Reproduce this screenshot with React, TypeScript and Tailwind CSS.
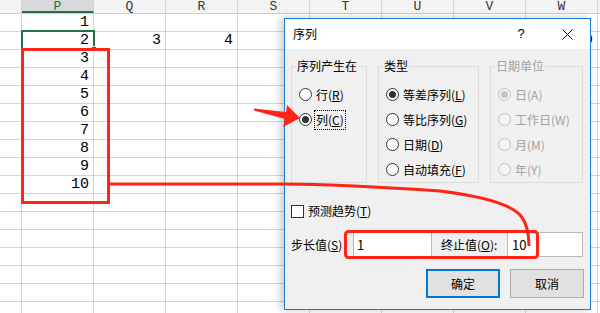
import React from "react";

const cols = ["P", "Q", "R", "S", "T", "U", "V", "W"];
const row2 = ["2", "3", "4", "5", "6", "7", "8", "9"];
const cjk = "font-['Microsoft_YaHei','Noto_Sans_CJK_SC',sans-serif]";

function Radio({ checked, disabled }: { checked?: boolean; disabled?: boolean }) {
  return (
    <span
      className={
        "flex h-[13px] w-[13px] shrink-0 items-center justify-center rounded-full border " +
        (disabled ? "border-[#c2c2c2] bg-[#f3f3f3]" : "border-[#333] bg-white")
      }
    >
      {checked && (
        <span className={"h-[7px] w-[7px] rounded-full " + (disabled ? "bg-[#c6c6c6]" : "bg-[#333]")} />
      )}
    </span>
  );
}

function Opt({
  text,
  k,
  checked,
  disabled,
  focus,
}: {
  text: string;
  k: string;
  checked?: boolean;
  disabled?: boolean;
  focus?: boolean;
}) {
  return (
    <div className="flex h-[25px] items-center">
      <Radio checked={checked} disabled={disabled} />
      <span
        className={
          "whitespace-nowrap leading-[18px] " +
          (focus ? "ml-[2px] border border-dotted border-black px-[1px]" : "ml-[4px]") +
          (disabled ? " text-[#a3a3a3]" : " text-black")
        }
      >
        {text}(<span className={disabled ? "" : "underline"}>{k}</span>)
      </span>
    </div>
  );
}

function Group({ title, w, disabled, children }: { title: string; w: string; disabled?: boolean; children: React.ReactNode }) {
  return (
    <fieldset className={"min-w-0 border border-[#dcdcdc] " + w}>
      <legend
        className={"ml-[4px] whitespace-nowrap px-[1px] leading-[16px] " + (disabled ? "text-[#a3a3a3]" : "text-black")}
      >
        {title}
      </legend>
      <div className="pl-[7px] pt-[8px]">{children}</div>
    </fieldset>
  );
}

export default function App() {
  return (
    <div className="relative h-[313px] w-[600px] overflow-hidden bg-white">
      {/* sheet */}
      <div className="flex flex-col font-['Liberation_Mono',monospace] text-[15px] text-black">
        <div className="flex h-[14px] border-b border-[#cfcfcf] bg-[#f3f3f3] text-[13px] leading-[13px]">
          <div className="w-[22px] shrink-0 border-r border-[#d4d4d4]" />
          {cols.map((c, i) => (
            <div
              key={c}
              className={
                "w-[72px] shrink-0 border-r border-[#d4d4d4] text-center " +
                (i === 0 ? "border-b-2 border-b-[#217346] bg-[#d9d9d9] text-[#217346]" : "text-[#333]")
              }
            >
              {c}
            </div>
          ))}
          <div className="flex-1" />
        </div>
        {Array.from({ length: 17 }).map((_, r) => (
          <div key={r} className="flex h-[18px] border-b border-[#d4d4d4] leading-[17px]">
            <div className="w-[22px] shrink-0 border-r border-[#d4d4d4]" />
            {cols.map((c, i) => {
              let v = "";
              if (r === 1) v = row2[i];
              else if (i === 0 && r < 10) v = String(r + 1);
              return (
                <div key={c} className="w-[72px] shrink-0 border-r border-[#d4d4d4] pr-[4px] text-right">
                  {v}
                </div>
              );
            })}
            <div className="flex-1" />
          </div>
        ))}
      </div>

      {/* selected cell */}
      <div className="absolute left-[21px] top-[30px] h-[20px] w-[74px] border-2 border-[#217346]" />
      <div className="absolute left-[91px] top-[46px] h-[6px] w-[6px] border border-white bg-[#217346]" />

      {/* dialog */}
      <div
        className={
          "absolute left-[284px] top-[18px] flex h-[292px] w-[307px] flex-col border border-[#1a7fd4] text-[12px] shadow-[-3px_0_8px_rgba(0,0,0,0.22)] " +
          cjk
        }
      >
        <div className="flex h-[30px] items-center bg-white">
          <span className="flex-1 pl-[8px] text-black">序列</span>
          <span className="flex w-[46px] justify-center font-['Liberation_Sans',sans-serif] text-[13px]">?</span>
          <span className="flex w-[46px] justify-center">
            <svg width="11" height="11" viewBox="0 0 11 11">
              <path d="M0.5 0.5 L10.5 10.5 M10.5 0.5 L0.5 10.5" stroke="#111" strokeWidth="1" />
            </svg>
          </span>
        </div>
        <div className="flex flex-1 flex-col bg-[#f0f0f0] px-[6px] pt-[9px]">
          <div className="flex gap-[11px]">
            <Group title="序列产生在" w="w-[76px]">
              <Opt text="行" k="R" />
              <Opt text="列" k="C" checked focus />
            </Group>
            <Group title="类型" w="w-[101px]">
              <Opt text="等差序列" k="L" checked />
              <Opt text="等比序列" k="G" />
              <Opt text="日期" k="D" />
              <Opt text="自动填充" k="F" />
            </Group>
            <Group title="日期单位" w="w-[93px]" disabled>
              <Opt text="日" k="A" checked disabled />
              <Opt text="工作日" k="W" disabled />
              <Opt text="月" k="M" disabled />
              <Opt text="年" k="Y" disabled />
            </Group>
          </div>

          <div className="mt-[20px] flex h-[16px] items-center">
            <span className="h-[13px] w-[13px] border border-[#333] bg-white" />
            <span className="ml-[4px]">
              预测趋势(<span className="underline">T</span>)
            </span>
          </div>

          <div className="mt-[13px] flex h-[25px] items-center">
            <span className="w-[62px] whitespace-nowrap">
              步长值(<span className="underline">S</span>)
            </span>
            <div className="flex h-full w-[79px] items-center border border-[#b9b9b9] bg-white pl-[3px] text-[13px]">1</div>
            <span className="w-[75px] whitespace-nowrap pl-[9px]">
              终止值(<span className="underline">O</span>):
            </span>
            <div className="flex h-full w-[76px] items-center border border-[#b9b9b9] bg-white pl-[4px] text-[13px]">10</div>
          </div>

          <div className="mt-[12px] flex justify-end gap-[10px]">
            <button className="h-[29px] w-[74px] border-2 border-[#0078d7] bg-[#e1e1e1]">确定</button>
            <button className="h-[29px] w-[74px] border border-[#adadad] bg-[#e1e1e1]">取消</button>
          </div>
        </div>
      </div>

      {/* annotations */}
      <svg className="pointer-events-none absolute left-0 top-0" width="600" height="313" viewBox="0 0 600 313">
        <rect x="22.5" y="49.5" width="86" height="153" fill="none" stroke="#ff2415" strokeWidth="3" />
        <path
          d="M109 184 L285 184 C330 184 380 187 440 191 C488 197 512 205 521 216 C528 225 529 235 529 246"
          fill="none"
          stroke="#ff2415"
          strokeWidth="3"
        />
        <rect x="345.5" y="231.5" width="192" height="26" rx="3" fill="none" stroke="#ff2415" strokeWidth="3" />
        <polygon points="254,108.5 286,112 287,105 300,118 283,127 285,119 254,110.5" fill="#ff2415" />
      </svg>
    </div>
  );
}
